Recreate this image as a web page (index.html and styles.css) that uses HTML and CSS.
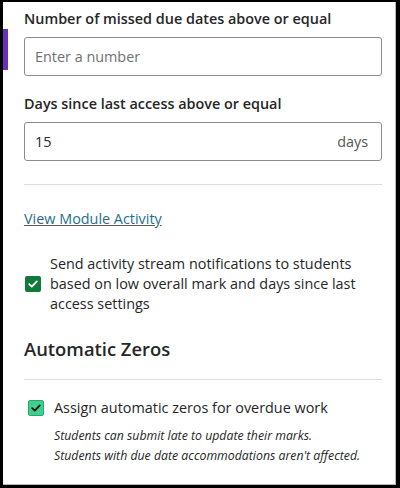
FILE: index.html
```html
<!DOCTYPE html>
<html>
<head>
<meta charset="utf-8">
<link rel="stylesheet" href="styles.css">
</head>
<body>
<div class="frame">
  <div class="accent"></div>
  <div class="content">
    <div class="field">
      <label class="label">Number of missed due dates above or equal</label>
      <div class="input"><span class="placeholder">Enter a number</span></div>
    </div>
    <div class="field field2">
      <label class="label">Days since last access above or equal</label>
      <div class="input"><span class="value">15</span><span class="unit">days</span></div>
    </div>
    <hr class="divider">
    <a class="link" href="#">View Module Activity</a>
    <div class="check-row">
      <span class="box box-dark">
        <svg width="10" height="8" viewBox="0 0 10 8"><path d="M1.2 4.2 L3.8 6.6 L8.8 1.4" fill="none" stroke="#fff" stroke-width="1.8" stroke-linecap="round" stroke-linejoin="round"/></svg>
      </span>
      <span class="check-text">Send activity stream notifications to students based on low overall mark and days since last access settings</span>
    </div>
    <h2 class="heading">Automatic Zeros</h2>
    <hr class="divider divider2">
    <div class="check-row2">
      <span class="box box-light">
        <svg width="10" height="8" viewBox="0 0 10 8"><path d="M1.2 4.2 L3.8 6.6 L8.8 1.4" fill="none" stroke="#111" stroke-width="1.8" stroke-linecap="round" stroke-linejoin="round"/></svg>
      </span>
      <div class="check2-body">
        <span class="check2-text">Assign automatic zeros for overdue work</span>
        <p class="note">Students can submit late to update their marks.<br>Students with due date accommodations aren't affected.</p>
      </div>
    </div>
  </div>
</div>
</body>
</html>
```
FILE: styles.css
```css
* { box-sizing: border-box; }
html, body { margin: 0; padding: 0; background: #fff; }
body {
  font-family: "Open Sans", "Noto Sans", sans-serif;
  color: #262626;
}
.frame {
  position: relative;
  width: 400px;
  height: 488px;
  border-top: 2px solid #000;
  border-left: 3px solid #000;
  border-right: 4px solid #000;
  border-bottom: 3px solid #000;
  box-shadow: inset -1px -1px 0 #bbb;
  overflow: hidden;
}
.accent {
  position: absolute;
  left: 0;
  top: 27px;
  width: 5px;
  height: 41px;
  background: #6b2fbf;
}
.content {
  padding: 7px 14px 0 21px;
}
.label {
  display: block;
  font-size: 14.4px;
  font-weight: 600;
  line-height: 20px;
  color: #262626;
}
.input {
  margin-top: 8px;
  height: 39px;
  border: 1px solid #8c8c8c;
  border-radius: 3px;
  display: flex;
  align-items: center;
  justify-content: space-between;
  padding: 0 13px 0 10px;
  font-size: 14.4px;
}
.placeholder { color: #707070; }
.value { color: #262626; }
.unit { color: #555; }
.field2 { margin-top: 18px; }
.divider {
  border: 0;
  border-top: 1px solid #dcdcdc;
  margin: 23px 0 0;
}
.link {
  display: inline-block;
  margin-top: 24px;
  font-size: 14.4px;
  color: #1f6e8c;
  text-decoration: underline;
  line-height: 20px;
}
.check-row {
  display: flex;
  align-items: center;
  gap: 9px;
  margin-top: 25px;
}
.box {
  flex: none;
  width: 16px;
  height: 16px;
  border-radius: 2px;
  display: flex;
  align-items: center;
  justify-content: center;
}
.box-dark { background: #0f7a3b; margin-left: 1px; }
.box-light { background: #3fd08f; border: 1px solid #2aa56f; }
.check-text {
  font-size: 14.4px;
  line-height: 20px;
  color: #262626;
}
.heading {
  margin: 22px 0 0;
  font-size: 18.4px;
  font-weight: 600;
  line-height: 26px;
  color: #262626;
}
.divider2 { margin-top: 17px; }
.check-row2 {
  display: flex;
  align-items: flex-start;
  gap: 10px;
  margin-top: 18px;
  padding-left: 4px;
}
.check-row2 .box { margin-top: 2px; }
.check2-text {
  display: block;
  font-size: 14.4px;
  line-height: 20px;
}
.note {
  margin: 8px 0 0;
  font-size: 12.3px;
  font-style: italic;
  line-height: 20px;
  color: #262626;
}
```
